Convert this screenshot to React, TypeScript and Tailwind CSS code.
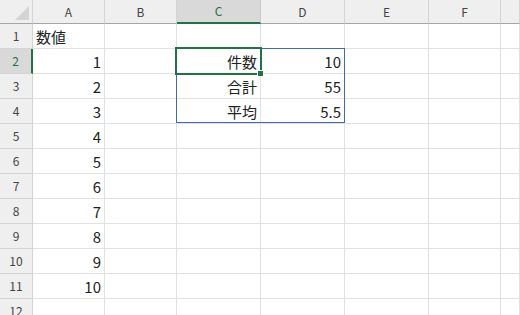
const cols = ["A", "B", "C", "D", "E", "F", "G"];

type Cell = { text: string; align: "left" | "right" };

const cells: Record<string, Cell> = {
  A1: { text: "数値", align: "left" },
  C2: { text: "件数", align: "right" },
  C3: { text: "合計", align: "right" },
  C4: { text: "平均", align: "right" },
  D2: { text: "10", align: "right" },
  D3: { text: "55", align: "right" },
  D4: { text: "5.5", align: "right" },
};
for (let i = 1; i <= 10; i++) cells[`A${i + 1}`] = { text: String(i), align: "right" };

const rows = Array.from({ length: 12 }, (_, i) => i + 1);

function CornerTriangle() {
  return (
    <svg width="33" height="24" viewBox="0 0 33 24" className="block">
      <polygon points="15,20 29,20 29,6" fill="#d4d4d4" />
    </svg>
  );
}

export default function App() {
  return (
    <div className="relative h-[315px] w-[520px] overflow-hidden bg-white font-['Noto_Sans_CJK_JP','Noto_Sans',sans-serif] text-[#222]">
      <div className="grid grid-cols-[33px_72px_72px_84px_84px_84px_72px_1fr] grid-rows-[24px_repeat(12,25px)]">
        {/* header row */}
        <div className="border-r border-b border-r-[#d4d4d4] border-b-[#a6a6a6] bg-[#efefef]">
          <CornerTriangle />
        </div>
        {cols.map((c) =>
          c === "C" ? (
            <div
              key={c}
              className="flex items-center justify-center border-r border-b-2 border-r-[#c8c8c8] border-b-[#217346] bg-[#d9d9d9] pb-[1px] text-[12px] leading-none text-[#217346]"
            >
              {c}
            </div>
          ) : (
            <div
              key={c}
              className="flex items-center justify-center border-r border-b border-r-[#d4d4d4] border-b-[#a6a6a6] bg-[#efefef] pt-[1px] text-[12px] leading-none text-[#444]"
            >
              {c === "G" ? "" : c}
            </div>
          )
        )}

        {rows.map((r) => (
          <div key={r} className="contents">
            {r === 2 ? (
              <div className="flex items-center justify-center border-r-2 border-b border-r-[#217346] border-b-[#d4d4d4] bg-[#d9d9d9] text-[12px] leading-none text-[#217346]">
                {r}
              </div>
            ) : (
              <div className="flex items-center justify-center border-r border-b border-r-[#d4d4d4] border-b-[#d4d4d4] bg-[#efefef] text-[12px] leading-none text-[#444]">
                {r}
              </div>
            )}
            {cols.map((c) => {
              const cell = cells[`${c}${r}`];
              return (
                <div
                  key={c}
                  className={`flex items-center border-r border-b border-[#e1e1e1] px-[3px] pt-[1px] text-[15px] leading-none ${
                    cell?.align === "right" ? "justify-end" : "justify-start"
                  }`}
                >
                  {cell?.text ?? ""}
                </div>
              );
            })}
          </div>
        ))}
      </div>

      {/* blue range border C2:D4 */}
      <div className="pointer-events-none absolute left-[176px] top-[48px] h-[75px] w-[169px] border border-[#4169ad]" />
      {/* active cell C2 */}
      <div className="pointer-events-none absolute left-[175px] top-[47px] h-[28px] w-[87px] border-2 border-[#217346]" />
      {/* fill handle */}
      <div className="pointer-events-none absolute left-[257px] top-[70px] h-[7px] w-[7px] border border-white bg-[#217346]" />
    </div>
  );
}
